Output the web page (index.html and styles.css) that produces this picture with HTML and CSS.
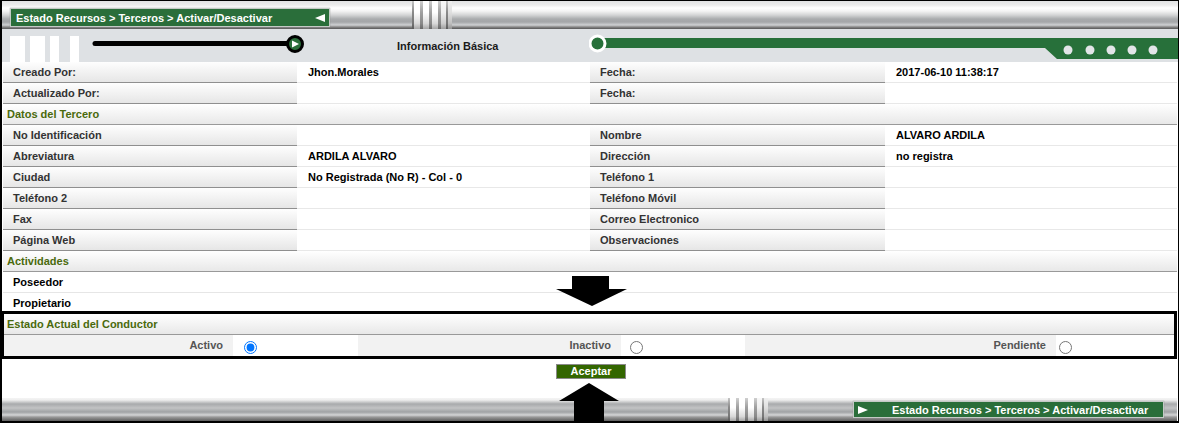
FILE: index.html
```html
<!DOCTYPE html>
<html lang="es">
<head>
<meta charset="utf-8">
<title>Estado Recursos</title>
<link rel="stylesheet" href="styles.css">
</head>
<body>
<div class="frame">
  <div class="bar topbar">
    <div class="crumb crumb-top">
      <span class="crumb-text">Estado Recursos &gt; Terceros &gt; Activar/Desactivar</span>
      <svg class="crumb-tri" width="10" height="8" viewBox="0 0 10 8"><polygon points="0,4 10,0 10,8" fill="#fff"/></svg>
    </div>
    <div class="grooves grooves-top"></div>
  </div>

  <div class="infobar">
    <div class="blocks"><i class="b1"></i><i class="b2"></i><i class="b3"></i><i class="b4"></i></div>
    <svg class="slider" width="216" height="33" viewBox="0 0 216 33">
      <line x1="5" y1="14.5" x2="200" y2="14.5" stroke="#000" stroke-width="5" stroke-linecap="round"/>
      <circle cx="205" cy="15" r="7.5" fill="#2a6e3a" stroke="#000" stroke-width="3"/>
      <polygon points="202,11.5 209,15 202,18.5" fill="#fff"/>
    </svg>
    <div class="info-title">Información Básica</div>
    <svg class="track" width="589" height="33" viewBox="0 0 589 33">
      <polygon points="9,9 589,9 589,30 468,30 456,19 9,19" fill="#27703a"/>
      <circle cx="8.5" cy="14.5" r="7.5" fill="#27703a" stroke="#fff" stroke-width="3"/>
      <circle cx="479" cy="21" r="4.5" fill="#e2e5e8"/>
      <circle cx="501" cy="21" r="4.5" fill="#e2e5e8"/>
      <circle cx="522" cy="21" r="4.5" fill="#e2e5e8"/>
      <circle cx="543" cy="21" r="4.5" fill="#e2e5e8"/>
      <circle cx="564" cy="21" r="4.5" fill="#e2e5e8"/>
    </svg>
  </div>

  <div class="grid">
    <div class="lb">Creado Por:</div><div class="vl">Jhon.Morales</div><div class="lb">Fecha:</div><div class="vl">2017-06-10 11:38:17</div>
    <div class="lb">Actualizado Por:</div><div class="vl"></div><div class="lb">Fecha:</div><div class="vl"></div>
    <div class="sec">Datos del Tercero</div>
    <div class="lb">No Identificación</div><div class="vl"></div><div class="lb">Nombre</div><div class="vl">ALVARO ARDILA</div>
    <div class="lb">Abreviatura</div><div class="vl">ARDILA ALVARO</div><div class="lb">Dirección</div><div class="vl">no registra</div>
    <div class="lb">Ciudad</div><div class="vl">No Registrada (No R) - Col - 0</div><div class="lb">Teléfono 1</div><div class="vl"></div>
    <div class="lb">Teléfono 2</div><div class="vl"></div><div class="lb">Teléfono Móvil</div><div class="vl"></div>
    <div class="lb">Fax</div><div class="vl"></div><div class="lb">Correo Electronico</div><div class="vl"></div>
    <div class="lb">Página Web</div><div class="vl"></div><div class="lb">Observaciones</div><div class="vl"></div>
    <div class="sec">Actividades</div>
    <div class="act">Poseedor</div>
    <div class="act act-last">Propietario</div>
  </div>

  <div class="estado">
    <div class="sec sec-in">Estado Actual del Conductor</div>
    <div class="radios">
      <div class="rl">Activo</div><div class="rc"><input class="r1" type="radio" name="estado" checked></div>
      <div class="rl">Inactivo</div><div class="rc"><input class="r2" type="radio" name="estado"></div>
      <div class="rl">Pendiente</div><div class="rc"><input class="r3" type="radio" name="estado"></div>
    </div>
  </div>

  <div class="actions"><button class="btn" type="button">Aceptar</button></div>

  <div class="bar bottombar">
    <div class="grooves grooves-bottom"></div>
    <div class="crumb crumb-bottom">
      <svg class="crumb-tri" width="10" height="8" viewBox="0 0 10 8"><polygon points="0,0 10,4 0,8" fill="#fff"/></svg>
      <span class="crumb-text">Estado Recursos &gt; Terceros &gt; Activar/Desactivar</span>
    </div>
  </div>

  <svg class="arrow arrow-down" width="71" height="30" viewBox="0 0 71 30"><polygon points="16,0 53,0 53,13 71,13 36,30 0,13 16,13" fill="#000"/></svg>
  <svg class="arrow arrow-up" width="60" height="38" viewBox="0 0 60 38"><polygon points="30,0 60,18 45,18 45,38 15,38 15,18 0,18" fill="#000"/></svg>
</div>
</body>
</html>
```

FILE: styles.css
```css
* { box-sizing: border-box; }

body {
  margin: 0;
  background: #fff;
  font-family: "Liberation Sans", Arial, sans-serif;
  font-size: 11px;
  font-weight: bold;
}

.frame {
  position: relative;
  width: 1179px;
  height: 423px;
  border-style: solid;
  border-color: #000;
  border-width: 1px 1px 2px 2px;
  background: #fff;
  overflow: hidden;
}

/* metallic bars */
.bar {
  display: flex;
  align-items: flex-start;
}

.topbar {
  height: 28px;
  background: linear-gradient(to bottom, #e2e3e4 0px, #ececec 4px, #ffffff 7px, #f4f4f4 10px, #d4d5d6 14px, #a9abad 18px, #a4a6a8 21px, #cfd1d3 24px, #9a9a9a 25.5px, #6c6c6c 27px, #5a5a5a 28px);
}

.bottombar {
  height: 23px;
  margin-top: 19px;
  margin-right: 1px;
  background: linear-gradient(to bottom, #f4f4f4 0px, #eeeeee 2px, #a8aaac 6px, #c2c3c4 10px, #a0a2a4 14px, #d4d5d6 17px, #9a9a9a 19px, #5e5e5e 23px);
}

.crumb {
  display: flex;
  align-items: center;
  background: #2a6e3a;
  color: #fff;
  border: 1px solid #c4cac6;
  box-shadow: 0 0 1px #888;
}

.crumb-top {
  width: 320px;
  height: 19px;
  margin: 7px 0 0 8px;
  padding: 0 4px 0 5px;
  justify-content: space-between;
}

.crumb-bottom {
  width: 311px;
  height: 17px;
  margin: 3px 0 0 85px;
  padding: 0 0 0 4px;
}

.crumb-bottom .crumb-text {
  margin-left: 24px;
}

.crumb-text { white-space: nowrap; }

.grooves {
  width: 40px;
  height: 100%;
  background:
    linear-gradient(to bottom, rgba(255,255,255,0.5), rgba(0,0,0,0) 40%, rgba(0,0,0,0.15) 80%, rgba(0,0,0,0.35)),
    linear-gradient(to right, #8a8a8a 0 2px, #ffffff 2px 8px, #a0a0a0 8px 11px, #ffffff 11px 17px, #a0a0a0 17px 20px, #ffffff 20px 26px, #a0a0a0 26px 29px, #f0f0f0 29px 34px, #8a8a8a 34px 36px, #e0e0e0 36px 40px);
}

.grooves-top { margin-left: 82px; }
.grooves-bottom { margin-left: 726px; }

/* info band */
.infobar {
  display: flex;
  align-items: flex-start;
  height: 33px;
  background: #dee1e4;
}

.blocks {
  display: flex;
  margin: 7px 0 0 8px;
  height: 26px;
}

.blocks i {
  display: block;
  height: 26px;
  background: #fff;
}

.blocks .b1 { width: 15px; }
.blocks .b2 { width: 15px; margin-left: 5px; }
.blocks .b3 { width: 9px; margin-left: 5px; }
.blocks .b4 { width: 9px; margin-left: 11px; }

.slider { margin-left: 11px; }

.info-title {
  margin: 11px 0 0 91px;
  line-height: 13px;
  color: #1a1a1a;
}

.track { margin-left: auto; }

/* data grid */
.grid {
  display: grid;
  grid-template-columns: 294px 293px 295px 1fr;
  margin: 0 1px;
}

.grid > div {
  height: 21px;
  line-height: 20px;
  white-space: nowrap;
}

.lb {
  padding-left: 10px;
  color: #333;
  background: linear-gradient(to bottom, #fefefe, #e6e6e6);
  border-bottom: 1px solid #8f8f8f;
}

.vl {
  padding-left: 11px;
  color: #000;
  background: #fff;
  border-bottom: 1px solid #e8e8e8;
}

.sec {
  grid-column: 1 / -1;
  padding-left: 4px;
  color: #4a6a0c;
  background: linear-gradient(to bottom, #ffffff, #e8e8e8);
  border-bottom: 1px solid #999;
}

.act {
  grid-column: 1 / -1;
  padding-left: 10px;
  color: #000;
  background: #fff;
  border-bottom: 1px solid #e6e6e6;
}

.grid > .act-last {
  height: 18px;
  border-bottom: 0;
}

/* estado box */
.estado {
  margin: 0 1px 0 -1px;
  border: 3px solid #000;
  background: #fff;
}

.sec-in {
  height: 21px;
  line-height: 20px;
  padding-left: 3px;
}

.radios {
  display: grid;
  grid-template-columns: 229px 125px 263px 124px 311px 1fr;
  height: 21px;
}

.rl {
  background: #f2f2f2;
  color: #555;
  text-align: right;
  padding-right: 10px;
  line-height: 21px;
}

.rc {
  background: #fff;
  display: flex;
  align-items: center;
}

.rc input {
  width: 13px;
  height: 13px;
  margin: 4px 0 0 0;
}

.rc .r1 { margin-left: 11px; }
.rc .r2 { margin-left: 9px; }
.rc .r3 { margin-left: 3px; }

/* action */
.actions {
  display: flex;
  margin: 5px 0 0 554px;
}

.btn {
  width: 70px;
  height: 15px;
  padding: 0;
  background: #336600;
  color: #fff;
  border: 1px solid #8a8a8a;
  font-family: "Liberation Sans", Arial, sans-serif;
  font-size: 11px;
  font-weight: bold;
  line-height: 13px;
}

/* annotation arrows */
.arrow { position: absolute; display: block; }
.arrow-down { left: 554px; top: 275px; }
.arrow-up { left: 557px; top: 382px; }
```
